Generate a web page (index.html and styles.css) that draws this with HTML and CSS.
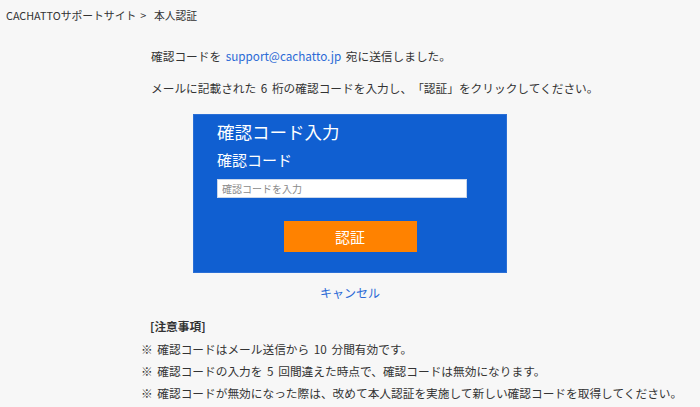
FILE: index.html
```html
<!DOCTYPE html>
<html lang="ja">
<head>
<meta charset="utf-8">
<title>本人認証</title>
<link rel="stylesheet" href="styles.css">
</head>
<body>
<nav class="crumb">CACHATTOサポートサイト &gt;&nbsp; 本人認証</nav>
<section class="intro">
  <p class="line first">確認コードを <a class="link" href="#">support@cachatto.jp</a> 宛に送信しました。</p>
  <p class="line">メールに記載された 6 桁の確認コードを入力し、「認証」をクリックしてください。</p>
</section>
<div class="box-row">
  <form class="box">
    <h1 class="box-title">確認コード入力</h1>
    <label class="box-label" for="code">確認コード</label>
    <input class="box-input" id="code" type="text" placeholder="確認コードを入力">
    <div class="btn-row"><button class="btn" type="button">認証</button></div>
  </form>
</div>
<div class="cancel-row"><a class="link cancel" href="#">キャンセル</a></div>
<section class="notes">
  <h2 class="notes-title">[注意事項]</h2>
  <p class="note">※ 確認コードはメール送信から 10 分間有効です。</p>
  <p class="note">※ 確認コードの入力を 5 回間違えた時点で、確認コードは無効になります。</p>
  <p class="note">※ 確認コードが無効になった際は、改めて本人認証を実施して新しい確認コードを取得してください。</p>
</section>
</body>
</html>
```
FILE: styles.css
```css
html, body {
  margin: 0;
  padding: 0;
}
body {
  background: #f7f7f7;
  color: #333333;
  font-family: "Noto Sans CJK JP", "Noto Sans", sans-serif;
  font-size: 11.7px;
  word-spacing: 2px;
  text-spacing-trim: space-all;
  font-feature-settings: "chws" 0, "halt" 0;
  width: 700px;
  height: 407px;
  overflow: hidden;
}
.crumb {
  padding: 5px 6px;
  font-size: 10.8px;
  word-spacing: 1.5px;
  line-height: 20px;
}
.intro {
  padding-left: 151px;
}
.line {
  margin: 12px 0 0;
  line-height: 20px;
}
.line.first {
  margin-top: 16px;
}
.link {
  color: #2b6ad6;
  text-decoration: none;
}
.box-row {
  display: flex;
  justify-content: center;
  margin-top: 16px;
}
.box {
  width: 314px;
  box-sizing: border-box;
  background: #105fd1;
  border: 1px solid #2a6fd6;
  padding: 5px 23px 20px;
  display: flex;
  flex-direction: column;
  align-items: flex-start;
}
.box-title {
  margin: 0;
  color: #ffffff;
  font-size: 17.5px;
  font-weight: normal;
  line-height: 24px;
}
.box-label {
  margin-top: 6px;
  color: #ffffff;
  font-size: 15px;
  line-height: 20px;
}
.box-input {
  margin-top: 9px;
  width: 250px;
  height: 19px;
  box-sizing: border-box;
  border: 1px solid #c9d6ea;
  background: #ffffff;
  padding: 0 4px;
  font-family: inherit;
  font-size: 10px;
  outline: none;
}
.box-input::placeholder {
  color: #8a8a8a;
}
.btn-row {
  align-self: stretch;
  display: flex;
  justify-content: center;
  margin-top: 23px;
}
.btn {
  width: 133px;
  height: 31px;
  border: 0;
  background: #ff8200;
  color: #ffffff;
  font-family: inherit;
  font-size: 15px;
  padding: 0;
}
.cancel-row {
  text-align: center;
  margin-top: 10px;
  line-height: 20px;
  font-size: 12px;
}
.notes {
  padding-left: 141px;
  margin-top: 13px;
}
.notes-title {
  margin: 0 0 2px 9px;
  font-size: 11.7px;
  font-weight: bold;
  line-height: 20px;
}
.note {
  margin: 0;
  line-height: 22px;
}
```
